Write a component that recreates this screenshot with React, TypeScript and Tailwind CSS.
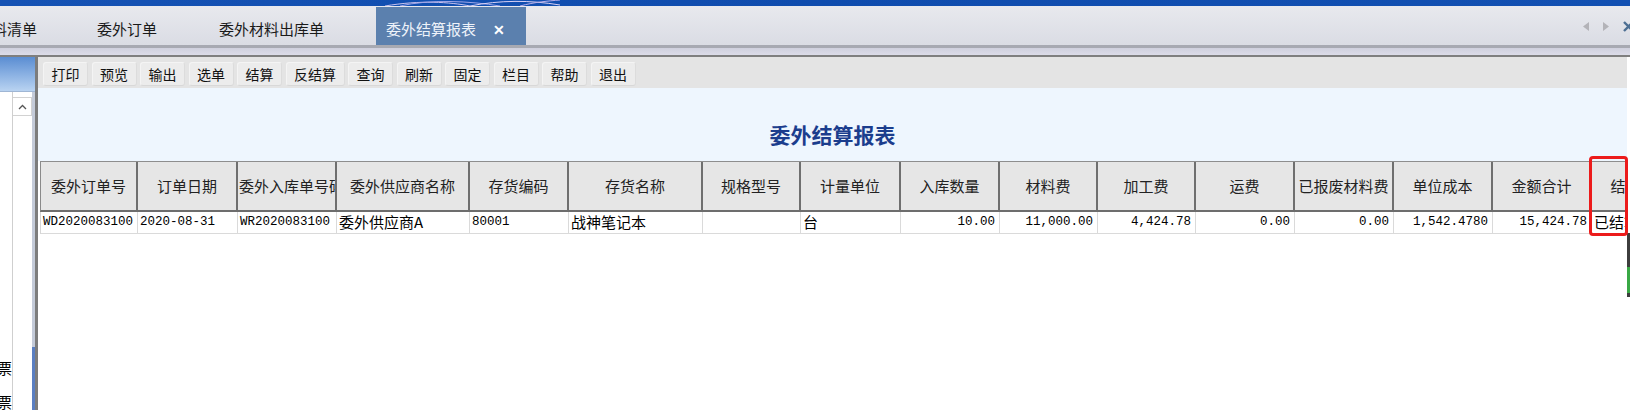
import React from "react";

type Col = { title: string; value: string; align: "left" | "right"; kind: "mono" | "cjk"; headLeft?: boolean };

const columns: Col[] = [
  { title: "委外订单号", value: "WD2020083100", align: "left", kind: "mono" },
  { title: "订单日期", value: "2020-08-31", align: "left", kind: "mono" },
  { title: "委外入库单号码", value: "WR2020083100", align: "left", kind: "mono", headLeft: true },
  { title: "委外供应商名称", value: "委外供应商A", align: "left", kind: "cjk" },
  { title: "存货编码", value: "80001", align: "left", kind: "mono" },
  { title: "存货名称", value: "战神笔记本", align: "left", kind: "cjk" },
  { title: "规格型号", value: "", align: "left", kind: "cjk" },
  { title: "计量单位", value: "台", align: "left", kind: "cjk" },
  { title: "入库数量", value: "10.00", align: "right", kind: "mono" },
  { title: "材料费", value: "11,000.00", align: "right", kind: "mono" },
  { title: "加工费", value: "4,424.78", align: "right", kind: "mono" },
  { title: "运费", value: "0.00", align: "right", kind: "mono" },
  { title: "已报废材料费", value: "0.00", align: "right", kind: "mono" },
  { title: "单位成本", value: "1,542.4780", align: "right", kind: "mono" },
  { title: "金额合计", value: "15,424.78", align: "right", kind: "mono" },
  { title: "结算标志", value: "已结算", align: "left", kind: "cjk" },
];

const tools = ["打印", "预览", "输出", "选单", "结算", "反结算", "查询", "刷新", "固定", "栏目", "帮助", "退出"];

const gridCols =
  "grid grid-cols-[97px_100px_99px_133px_99px_134px_98px_100px_99px_98px_98px_99px_99px_99px_99px_99px]";

const App: React.FC = () => {
  return (
    <div className="relative w-[1630px] h-[410px] overflow-hidden bg-white font-['Noto_Sans_CJK_SC',sans-serif] text-[#1a1a1a]">
      {/* top banner strip */}
      <div className="h-[6px] bg-gradient-to-r from-[#1552b4] via-[#0f4cae] to-[#1250b2] overflow-hidden">
        <svg width="1630" height="6" viewBox="0 0 1630 6">
          <path d="M385 6 C420 0 450 2 470 6" stroke="#c9c2ee" strokeWidth="1" fill="none" />
          <path d="M400 6 C430 -1 470 1 500 6" stroke="#9fa5e8" strokeWidth="1" fill="none" />
          <path d="M470 6 C500 0 530 0 560 5" stroke="#d8d0f5" strokeWidth="1" fill="none" />
          <path d="M520 6 C535 2 548 1 560 0" stroke="#b9b0ea" strokeWidth="1" fill="none" />
        </svg>
      </div>

      {/* tab bar */}
      <div className="h-[39px] flex items-stretch bg-gradient-to-b from-[#e8e9ee] to-[#dadce4] text-[15px] leading-none">
        <div className="flex items-center pt-[6px] ml-[-23px] whitespace-nowrap">用料清单</div>
        <div className="flex items-center pt-[6px] ml-[60px] whitespace-nowrap">委外订单</div>
        <div className="flex items-center pt-[6px] ml-[62px] whitespace-nowrap">委外材料出库单</div>
        <div className="mt-[1px] ml-[52px] w-[150px] bg-[#5b80ae] flex items-center pt-[5px] pl-[10px] text-[#eef3fa] whitespace-nowrap">
          <span>委外结算报表</span>
          <span className="ml-[17px] text-[14px] font-bold text-white">✕</span>
        </div>
        <div className="flex-1" />
        <div className="flex items-center gap-[14px] mr-[-4px] pt-[1px]">
          <svg width="6" height="9" viewBox="0 0 6 9">
            <path d="M6 0 L0 4.5 L6 9 Z" fill="#b3b3b8" />
          </svg>
          <svg width="6" height="9" viewBox="0 0 6 9">
            <path d="M0 0 L6 4.5 L0 9 Z" fill="#b3b3b8" />
          </svg>
          <svg width="11" height="11" viewBox="0 0 11 11">
            <path d="M1 1 L10 10 M10 1 L1 10" stroke="#4d6f93" strokeWidth="2.4" />
          </svg>
        </div>
      </div>

      {/* separator lines */}
      <div className="h-[3px] bg-[#a7a9b2]" />
      <div className="h-[7px] bg-gradient-to-b from-[#cfd0de] to-[#dcdce8]" />
      <div className="h-[2px] bg-[#7f7f7f]" />

      {/* body */}
      <div className="flex h-[353px]">
        {/* left sidebar */}
        <div className="w-[35px] flex flex-col">
          <div className="h-[40px] bg-gradient-to-b from-[#5a8dd2] to-[#b9d3f1] border-b border-[#9fb6d4]" />
          <div className="flex-1 flex">
            <div className="w-[12px] overflow-hidden flex flex-col items-end pt-[268px] text-[15px] leading-[16px] text-black">
              <div className="flex justify-end w-[12px] whitespace-nowrap">发票</div>
              <div className="flex justify-end w-[12px] whitespace-nowrap mt-[18px]">发票</div>
            </div>
            <div className="w-[20px] border-l border-[#cfcfcf] bg-white pt-[5px]">
              <div className="h-[19px] border border-[#d2d2d2] border-l-0 flex items-center justify-center">
                <svg width="9" height="6" viewBox="0 0 9 6">
                  <path d="M1 5 L4.5 1.5 L8 5" stroke="#555" strokeWidth="1.3" fill="none" />
                </svg>
              </div>
            </div>
            <div className="w-[3px] flex flex-col">
              <div className="flex-1 bg-[#c4cbd9]" />
              <div className="h-[63px] bg-[#5a7fc2]" />
            </div>
          </div>
        </div>

        {/* main panel */}
        <div className="w-[1592px] border-l-[3px] border-[#7c7c7c] flex flex-col overflow-hidden">
          {/* toolbar */}
          <div className="h-[31px] bg-[#e4e4e4] flex items-start pt-[5px] pl-[5px] gap-[3.5px]">
            {tools.map((t) => (
              <button
                key={t}
                className="h-[24px] px-[7.5px] text-[14px] leading-none text-[#111] bg-[#ececec] rounded-[3px] border border-t-[#f4f4f4] border-l-[#f4f4f4] border-r-[#dcdcdc] border-b-[#d8d8d8] whitespace-nowrap"
              >
                {t}
              </button>
            ))}
          </div>

          {/* report title */}
          <div className="h-[73px] bg-[#eef6fe] pt-[35px] text-center">
            <span className="text-[21px] leading-[22px] font-bold text-[#1b3d8d]">委外结算报表</span>
          </div>

          {/* table */}
          <div className="flex-1 bg-white pl-[2px] overflow-hidden">
            <div className={`${gridCols} h-[51px] bg-[#e6e6e6] border-t border-[#8e8e8e] border-b-2 border-b-[#6d6d6d] border-l border-l-[#8a8a8a]`}>
              {columns.map((c) => (
                <div
                  key={c.title}
                  className={`flex items-center border-r-2 border-[#6f6f6f] text-[15px] text-[#222] whitespace-nowrap overflow-hidden ${
                    c.headLeft ? "justify-start pl-[1px]" : "justify-center"
                  }`}
                >
                  {c.title}
                </div>
              ))}
            </div>
            <div className={`${gridCols} h-[22px] border-l border-l-[#d6d6d6]`}>
              {columns.map((c) => (
                <div
                  key={c.title}
                  className={`flex items-center border-r border-b border-[#dadada] overflow-hidden whitespace-nowrap text-black ${
                    c.align === "right" ? "justify-end pr-[4px]" : "justify-start pl-[2px]"
                  } ${
                    c.kind === "mono"
                      ? "font-['Liberation_Mono',monospace] text-[12.5px]"
                      : "text-[15px]"
                  }`}
                >
                  {c.value}
                </div>
              ))}
            </div>
          </div>
        </div>

        {/* far right edge */}
        <div className="w-[3px] flex flex-col">
          <div className="h-[176px] bg-white" />
          <div className="h-[34px] bg-[#3d3d3d]" />
          <div className="h-[26px] bg-[#39a845]" />
          <div className="h-[4px] bg-[#3d3d3d]" />
          <div className="flex-1 bg-white" />
        </div>
      </div>

      {/* annotation box */}
      <div className="absolute left-[1589px] top-[156px] w-[39px] h-[80px] border-[3px] border-[#ec1b1b] rounded-[4px]" />
    </div>
  );
};

export default App;
